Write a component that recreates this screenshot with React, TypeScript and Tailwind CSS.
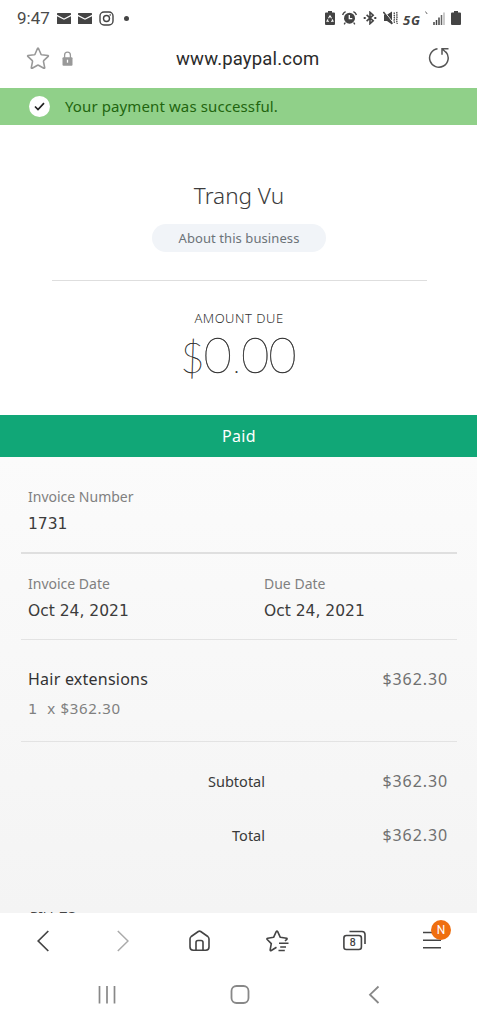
import React from 'react';

const invoice = {
  business: 'Trang Vu',
  number: '1731',
  invoiceDate: 'Oct 24, 2021',
  dueDate: 'Oct 24, 2021',
  item: 'Hair extensions',
  price: '$362.30',
};

const MailIcon = () => (
  <svg className="h-[11px] w-[14px]" viewBox="0 0 14 11" fill="#444">
    <path d="M0.6 0h12.8q.6 0 .6.6v1.2L7 5.4 0 1.8V.6Q0 0 .6 0Z" />
    <path d="M0 3.2 7 6.8l7-3.6v7.2q0 .6-.6.6H.6Q0 11 0 10.400Z" />
  </svg>
);

const InstagramIcon = () => (
  <svg className="h-[15px] w-[15px]" viewBox="0 0 15 15" fill="none" stroke="#444" strokeWidth="1.400">
    <rect x="1" y="1" width="13" height="13" rx="4" />
    <circle cx="7.500" cy="7.500" r="3" />
    <circle cx="11.200" cy="3.900" r="0.500" fill="#444" strokeWidth="0.600" />
  </svg>
);

const StatusBar = () => (
  <div className="flex h-9 items-center justify-between pl-[17px] pr-4">
    <div className="flex items-center">
      <span className="w-10 font-['Roboto',sans-serif] text-[17px] leading-5 text-[#4a4a4a]">9:47</span>
      <div className="flex items-center gap-[7px]">
        <MailIcon />
        <MailIcon />
        <InstagramIcon />
      </div>
      <span className="ml-[10px] h-[5px] w-[5px] rounded-full bg-[#444]" />
    </div>
    <div className="flex items-center">
      {/* battery saver */}
      <svg className="h-[14px] w-[10px]" viewBox="0 0 10 14">
        <path d="M3 0h4v1.500h2q1 0 1 1V13q0 1-1 1H1q-1 0-1-1V2.500q0-1 1-1h2Z" fill="#444" />
        <path d="M3.500 7.200 5 4.800l1.500 2.400M7.200 8.400l.8 1.900H6M4 10.300H2l.8-1.900" fill="none" stroke="#fff" strokeWidth="1.100" />
      </svg>
      {/* alarm */}
      <svg className="ml-[7px] h-[14px] w-[15px]" viewBox="0 0 15 14" fill="none">
        <circle cx="7.500" cy="7.200" r="5.500" fill="#444" />
        <path d="M3.300 11.500 2.200 13.300M11.700 11.500l1.100 1.800M.6 4Q1.200 1.700 3.600.7M14.400 4Q13.800 1.700 11.400.7" stroke="#444" strokeWidth="1.400" />
        <path d="M7.300 4v3.700h3" stroke="#fff" strokeWidth="1.300" />
      </svg>
      {/* bluetooth */}
      <svg className="ml-[6px] h-[14px] w-[14px]" viewBox="0 0 14 14" fill="none" stroke="#444" strokeWidth="1.600">
        <path d="M3.600 3.800 10.200 9.800 7 12.700V1.300l3.200 2.900-6.600 6" />
        <path d="M.7 7h2M11.300 7h2" strokeWidth="2" />
      </svg>
      {/* mute / vibrate */}
      <svg className="ml-[6px] h-[14px] w-[15px]" viewBox="0 0 15 14" fill="none" stroke="#444">
        <path d="M1 3.800h3L9 .5v13L4 10H1Z" fill="#444" stroke="none" />
        <path d="M1.400.5 10 11.500" stroke="#fff" strokeWidth="1" />
        <path d="M.4 1 9.400 12.800" strokeWidth="1.500" />
        <path d="m11 1.500.6 2-.6 2 .6 2-.6 2 .6 3M13.600 1l.6 2-.6 2 .6 2-.6 2 .6 4" strokeWidth="1.300" strokeDasharray="1.600 0.700" />
      </svg>
      <span className="ml-[5px] w-[20px] pt-[3px] font-['Open_Sans',sans-serif] text-[13px] font-bold italic leading-4 tracking-[0.800px] text-[#444]">5G</span>
      <svg className="ml-[2px] h-[14px] w-[3px]" viewBox="0 0 3 14"><path d="m.4.500 1.800 2.500" stroke="#666" strokeWidth="1" /></svg>
      {/* signal */}
      <svg className="ml-[5px] h-[13px] w-3" viewBox="0 0 12 13" strokeWidth="1.500">
        <path d="M1 13v-3M3.500 13V8M6 13V5.500" stroke="#444" />
        <path d="M8.500 13V3" stroke="#666" />
        <path d="M11 13V.5" stroke="#bbb" />
      </svg>
      <svg className="ml-[6px] h-[14px] w-[10px]" viewBox="0 0 10 14">
        <path d="M3 0h4v1.500h2q1 0 1 1V13q0 1-1 1H1q-1 0-1-1V2.500q0-1 1-1h2Z" fill="#444" />
      </svg>
    </div>
  </div>
);

const AddressBar = () => (
  <div className="grid h-[52px] grid-cols-[176px_145px_1fr] items-start">
    <div className="flex pl-[26px] pt-[11px]">
      <svg className="h-[23px] w-6" viewBox="0 0 24 23" fill="none" stroke="#999" strokeWidth="1.600" strokeLinejoin="round">
        <path d="M11.600 1.200Q12 .8 12.400 1.200L15 7.300Q15.200 7.700 15.700 7.800L22 8.500Q22.700 8.800 22.200 9.400L17.700 13.700Q17.400 14.100 17.500 14.600L18.700 20.700Q18.500 21.500 17.800 21.200L12.500 18.200Q12 18 11.500 18.200L6.200 21.200Q5.500 21.500 5.300 20.700L6.500 14.600Q6.600 14.100 6.300 13.700L1.800 9.400Q1.300 8.800 2 8.500L8.300 7.800Q8.800 7.700 9 7.300Z" />
      </svg>
      <svg className="ml-3 mt-[4px] h-[15px] w-[11px]" viewBox="0 0 11 15" fill="none">
        <path d="M2.600 7V4a2.900 2.900 0 0 1 5.800 0v3" stroke="#999" strokeWidth="1.300" />
        <rect x="0.500" y="6.200" width="10" height="8.500" rx="1" fill="#999" />
        <path d="M5.500 8.700v3" stroke="#fff" strokeWidth="1.300" />
      </svg>
    </div>
    <span className="pt-[11px] font-['Roboto',sans-serif] text-[18.500px] leading-6 tracking-[0.180px] text-[#2b2b2b]">www.paypal.com</span>
    <div className="flex justify-end pr-[27px] pt-[11px]">
      <svg className="h-[22px] w-[22px]" viewBox="0 0 22 22" fill="none" stroke="#555" strokeWidth="1.500">
        <path d="M9.500 1.700A9.300 9.300 0 1 0 18 4.900" />
        <path d="M20.500 1.700H14V7.700M14 1.700l4.400 4" />
      </svg>
    </div>
  </div>
);

const SuccessBanner = () => (
  <div className="flex h-[37px] items-center bg-[#90d089] pl-[29px]">
    <span className="flex h-[21px] w-[21px] items-center justify-center rounded-full bg-white">
      <svg className="h-[9px] w-[11px]" viewBox="0 0 11 9" fill="none" stroke="#222" strokeWidth="1.700">
        <path d="M1 4.500 4 7.500 10 1.200" />
      </svg>
    </span>
    <span className="mb-px ml-[15px] text-[15px] leading-5 tracking-[0.110px] text-[#22650f]">Your payment was successful.</span>
  </div>
);

const Summary = () => (
  <header className="flex h-[290px] flex-col items-center pl-px">
    <h1 className="mt-[55px] text-[22.500px] font-light leading-8 text-[#3c3c3c]">{invoice.business}</h1>
    <button className="mt-3 h-7 w-[174px] rounded-full bg-[#f1f4f8] text-[13px] leading-7 tracking-[0.080px] text-[#6c7378]">
      About this business
    </button>
    <hr className="mt-7 w-[375px] border-[#dedede]" />
    <p className="mt-[27px] text-[13px] font-light leading-5 tracking-[0.500px] text-[#333]">AMOUNT DUE</p>
    <p className="mr-[2px] mt-px flex items-baseline font-['Lato',sans-serif] text-[49px] font-extralight leading-[50px] tracking-[-1px] text-[#333] [-webkit-text-stroke:0.4px_#333]">
      <span className="text-[42px]">$</span>
      <span>0</span>
      <span className="px-[2px] text-[30px] [-webkit-text-stroke:0px]">.</span>
      <span>00</span>
    </p>
  </header>
);

type FieldProps = { label: string; value: string };

const Field: React.FC<FieldProps> = ({ label, value }) => (
  <div>
    <p className="text-[14px] leading-5 text-[#808080]">{label}</p>
    <p className="mt-[7px] font-['DejaVu_Sans',sans-serif] text-[15.500px] leading-5 text-[#3c3c3c]">{value}</p>
  </div>
);

const TotalRow: React.FC<FieldProps> = ({ label, value }) => (
  <div className="flex h-[54px] items-center justify-between">
    <span className="w-[237px] text-right text-[14.500px] leading-5 text-[#3a3a3a]">{label}</span>
    <span className="text-[16px] leading-5 tracking-[0.900px] text-[#707070]">{value}</span>
  </div>
);

const InvoiceDetails = () => (
  <main className="h-[456px] overflow-hidden bg-gradient-to-b from-[#fbfbfb] to-[#f4f4f4] pl-[21px] pr-5">
    <section className="h-[97px] border-b-2 border-[#dfdfdf] pl-[7px] pt-[30px]">
      <Field label="Invoice Number" value={invoice.number} />
    </section>
    <section className="grid h-[86px] grid-cols-[236px_1fr] border-b border-[#e3e3e3] pl-[7px] pt-5">
      <Field label="Invoice Date" value={invoice.invoiceDate} />
      <Field label="Due Date" value={invoice.dueDate} />
    </section>
    <section className="flex h-[102px] justify-between border-b border-[#e3e3e3] pl-[7px] pr-[9px] pt-[29px]">
      <div>
        <p className="text-[16px] leading-5 tracking-[0.230px] text-[#333]">{invoice.item}</p>
        <p className="mt-[9px] whitespace-pre text-[15px] leading-5 tracking-[0.700px] text-[#808080]">
          <span className="font-['DejaVu_Sans',sans-serif] text-[14.500px]">1</span>
          {'  x '}
          {invoice.price}
        </p>
      </div>
      <span className="text-[16px] leading-5 tracking-[0.900px] text-[#707070]">{invoice.price}</span>
    </section>
    <section className="pl-[7px] pr-[9px] pt-3">
      <TotalRow label="Subtotal" value={invoice.price} />
      <TotalRow label="Total" value={invoice.price} />
    </section>
    {/* heading of the next block, only its top edge shows above the toolbar */}
    <p className="ml-[9px] mt-[44px] text-[13px] leading-5 text-[#444]">BILL TO</p>
  </main>
);

const BrowserToolbar = () => (
  <nav className="flex h-[55px] items-center bg-white pl-[37px]">
    <svg className="h-[22px] w-3" viewBox="0 0 12 22" fill="none" stroke="#444" strokeWidth="1.700">
      <path d="M11.300 1 1.200 11l10.100 10" />
    </svg>
    <svg className="ml-[68px] h-[22px] w-3" viewBox="0 0 12 22" fill="none" stroke="#aaa" strokeWidth="1.500">
      <path d="M.8 1 11 11 .8 21" />
    </svg>
    <svg className="ml-[60px] h-[22px] w-[21px]" viewBox="0 0 21 22" fill="none" stroke="#444" strokeWidth="1.600" strokeLinejoin="round">
      <path d="M9.300 1.500Q10.500.7 11.700 1.500L18.800 6.500Q20 7.500 20 9V17Q20 20.200 16.800 20.200H4.200Q1 20.200 1 17V9Q1 7.500 2.200 6.500Z" />
      <path d="M7 20.200V12.500q0-2 2-2h3q2 0 2 2v7.700" />
    </svg>
    <svg className="ml-14 h-[22px] w-[23px]" viewBox="0 0 23 22" fill="none" stroke="#444" strokeWidth="1.600" strokeLinejoin="round">
      <path d="M10.500 17.200 5.300 20.500Q4 21 4.200 19.700L5.300 13.600 1.200 9.500Q.5 8.500 1.800 8.200L7.600 7.300 10.200 1.700Q11 .6 11.700 1.700L14.300 7.300 20.700 8.200Q21.500 8.700 20.500 9.700L19 11" />
      <path d="M13 13.300h9.500M14.200 17H20M12.500 20.500h6.300" />
    </svg>
    <svg className="ml-[54px] h-[22px] w-6" viewBox="0 0 24 22" fill="none" stroke="#444" strokeWidth="1.600">
      <rect x="0.900" y="5.500" width="17.500" height="14" rx="2.500" />
      <path d="M6.500 1.500h12.500q3 0 3 3V14" />
      <text x="9.700" y="16.300" textAnchor="middle" fill="#333" stroke="#333" strokeWidth="0.200" fontFamily="Roboto" fontSize="10.500">8</text>
    </svg>
    <div className="relative ml-[56px] h-[22px] w-[18px]">
      <svg className="h-[22px] w-[18px]" viewBox="0 0 18 22" stroke="#444" strokeWidth="1.600">
        <path d="M0 2.500h18M0 10.200h18M0 17.800h18" />
      </svg>
      <span className="absolute -top-[10px] left-[8px] flex h-5 w-5 items-center justify-center rounded-full bg-[#ef6f10] font-['Roboto',sans-serif] text-[12px] text-white">
        N
      </span>
    </div>
  </nav>
);

const SystemNav = () => (
  <nav className="flex h-[56px] items-start bg-white pl-[98px] pt-[17px]">
    <svg className="h-5 w-[18px]" viewBox="0 0 18 20" stroke="#888" strokeWidth="1.700">
      <path d="M1.500 1v17.500M9 1v17.500M16.500 1v17.500" />
    </svg>
    <svg className="ml-[114px] h-5 w-5" viewBox="0 0 20 20" fill="none" stroke="#888" strokeWidth="1.800">
      <rect x="1.500" y="1" width="17" height="17" rx="5" />
    </svg>
    <svg className="ml-[118px] h-5 w-3" viewBox="0 0 12 20" fill="none" stroke="#888" strokeWidth="1.800">
      <path d="M10.500 1.500 2 9.700l8.500 8.300" />
    </svg>
  </nav>
);

const App: React.FC = () => {
  return (
    <div className="h-[1024px] w-[477px] overflow-hidden bg-white font-['Noto_Sans',sans-serif]">
      <StatusBar />
      <AddressBar />
      <SuccessBanner />
      <Summary />
      <div className="flex h-[42px] items-center justify-center bg-[#11a777] pl-px text-[16px] tracking-[0.400px] text-white">Paid</div>
      <InvoiceDetails />
      <BrowserToolbar />
      <SystemNav />
    </div>
  );
};

export default App;
